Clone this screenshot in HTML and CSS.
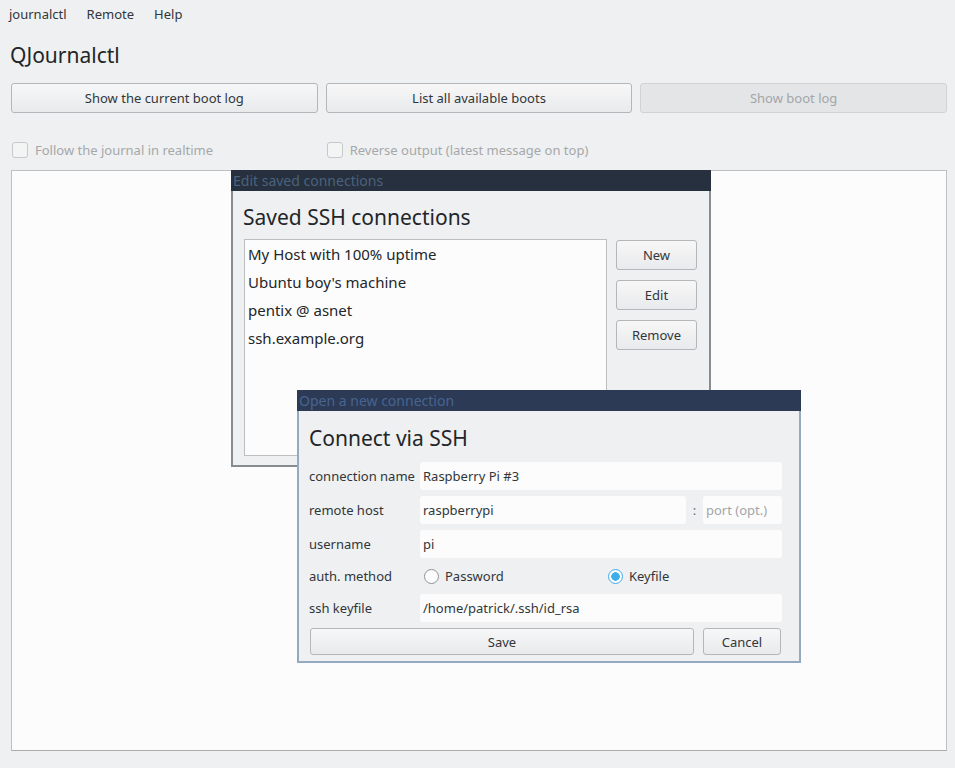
FILE: index.html
```html
<!DOCTYPE html>
<html lang="en">
<head>
    <meta charset="UTF-8">
    <title>QJournalctl</title>
    <link rel="stylesheet" href="styles.css">
</head>
<body>
    <div class="menubar">
        <span>journalctl</span>
        <span>Remote</span>
        <span>Help</span>
    </div>

    <div class="main">
        <h1 class="app-title">QJournalctl</h1>

        <div class="button-row">
            <button class="btn">Show the current boot log</button>
            <button class="btn">List all available boots</button>
            <button class="btn" disabled>Show boot log</button>
        </div>

        <div class="check-row">
            <label class="check"><span class="box"></span>Follow the journal in realtime</label>
            <label class="check"><span class="box"></span>Reverse output (latest message on top)</label>
        </div>

        <div class="log-area"></div>
    </div>

    <!-- Edit saved connections -->
    <div class="window saved-win">
        <div class="titlebar">Edit saved connections</div>
        <div class="win-body">
            <h2 class="win-heading">Saved SSH connections</h2>
            <div class="saved-row">
                <ul class="conn-list">
                    <li>My Host with 100% uptime</li>
                    <li>Ubuntu boy's machine</li>
                    <li>pentix @ asnet</li>
                    <li>ssh.example.org</li>
                </ul>
                <div class="side-buttons">
                    <button class="btn">New</button>
                    <button class="btn">Edit</button>
                    <button class="btn">Remove</button>
                </div>
            </div>
        </div>
    </div>

    <!-- Open a new connection -->
    <div class="window connect-win">
        <div class="titlebar">Open a new connection</div>
        <div class="win-body">
            <h2 class="win-heading">Connect via SSH</h2>
            <div class="form">
                <span class="lbl">connection name</span>
                <div class="field">Raspberry Pi #3</div>

                <span class="lbl">remote host</span>
                <div class="host-row">
                    <div class="field">raspberrypi</div>
                    <span class="colon">:</span>
                    <div class="field placeholder">port (opt.)</div>
                </div>

                <span class="lbl">username</span>
                <div class="field">pi</div>

                <span class="lbl">auth. method</span>
                <div class="radio-row">
                    <label class="radio"><span class="dot"></span>Password</label>
                    <label class="radio"><span class="dot on"></span>Keyfile</label>
                </div>

                <span class="lbl">ssh keyfile</span>
                <div class="field">/home/patrick/.ssh/id_rsa</div>
            </div>
            <div class="dialog-buttons">
                <button class="btn save">Save</button>
                <button class="btn cancel">Cancel</button>
            </div>
        </div>
    </div>
</body>
</html>
```

FILE: styles.css
```css
body {
    margin: 0;
    background: #eff0f1;
    color: #31363b;
    font-family: 'Noto Sans', 'Open Sans', sans-serif;
    font-size: 13px;
    height: 768px;
    overflow: hidden;
    position: relative;
}

.menubar {
    display: flex;
    gap: 20px;
    height: 28px;
    align-items: center;
    padding-left: 9px;
}

.main {
    padding: 0 8px 0 11px;
}

.app-title {
    margin: 12px 0 0 -1px;
    font-size: 21px;
    font-weight: normal;
    line-height: 30px;
    color: #232629;
}

.btn {
    font-family: inherit;
    font-size: 13px;
    color: #31363b;
    height: 30px;
    background: linear-gradient(#f7f7f8, #e9eaeb);
    border: 1px solid #b4b7ba;
    border-radius: 3px;
    padding: 0 8px;
}

.btn:disabled {
    background: #e4e5e7;
    border-color: #d0d2d4;
    color: #a3a6a9;
}

.button-row {
    display: grid;
    grid-template-columns: repeat(3, 1fr);
    gap: 8px;
    margin-top: 13px;
}

.check-row {
    display: grid;
    grid-template-columns: repeat(3, 1fr);
    gap: 8px;
    margin-top: 27px;
    height: 20px;
    align-items: center;
}

.check {
    display: flex;
    align-items: center;
    gap: 7px;
    color: #a5a8ab;
    white-space: nowrap;
    padding-left: 1px;
}

.check .box {
    width: 14px;
    height: 14px;
    border: 1px solid #c6c8ca;
    border-radius: 3px;
    background: #f3f4f4;
}

.log-area {
    margin-top: 10px;
    height: 579px;
    background: #fcfcfc;
    border: 1px solid #bdbfc1;
    border-bottom-color: #a9abad;
}

/* floating dialogs */
.window {
    position: absolute;
    display: flex;
    flex-direction: column;
}

.saved-win {
    left: 231px;
    top: 170px;
    width: 480px;
    height: 297px;
}

.connect-win {
    left: 297px;
    top: 390px;
    width: 504px;
    height: 273px;
}

.titlebar {
    height: 21px;
    line-height: 21px;
    font-size: 14px;
    padding-left: 2px;
    background: #27303e;
    color: #4a627d;
    white-space: nowrap;
}

.connect-win .titlebar {
    background: #2c3a56;
    color: #48648f;
}

.win-body {
    flex: 1;
    background: #eff0f1;
    border: 2px solid #878c90;
    border-top: none;
}

.connect-win .win-body {
    border-color: #95aac0;
}

.win-heading {
    margin: 0;
    font-size: 21px;
    font-weight: normal;
    line-height: 28px;
    color: #232629;
}

.saved-win .win-body {
    padding: 12px 12px 0 10px;
}

.saved-win .conn-list {
    margin-left: 1px;
}

.saved-row {
    display: flex;
    gap: 9px;
    margin-top: 8px;
}

.conn-list {
    list-style: none;
    margin: 0;
    padding: 0 0 0 3px;
    width: 359px;
    height: 215px;
    background: #fcfcfc;
    border: 1px solid #bcbec0;
    font-size: 15px;
    color: #232629;
}

.conn-list li {
    line-height: 28px;
}

.side-buttons {
    display: flex;
    flex-direction: column;
    gap: 10px;
    padding-top: 1px;
}

.side-buttons .btn {
    width: 81px;
}

.connect-win .win-body {
    padding: 13px 17px 0 10px;
}

.form {
    display: grid;
    grid-template-columns: 111px 1fr;
    grid-template-rows: 28px 28px 28px 24px 28px;
    row-gap: 6px;
    margin-top: 10px;
    align-items: center;
}

.lbl {
    white-space: nowrap;
}

.field {
    height: 28px;
    line-height: 28px;
    background: #fcfcfc;
    border-radius: 3px;
    padding-left: 3px;
    white-space: nowrap;
}

.field.placeholder {
    color: #a3a6a9;
}

.host-row {
    display: grid;
    grid-template-columns: 1fr 17px 79px;
    align-items: center;
}

.colon {
    text-align: center;
    color: #6b7074;
}

.radio-row {
    display: grid;
    grid-template-columns: 184px 1fr;
    align-items: center;
}

.radio {
    display: flex;
    align-items: center;
    gap: 6px;
    padding-left: 4px;
}

.dot {
    width: 13px;
    height: 13px;
    border: 1px solid #8f9396;
    border-radius: 50%;
    background: #fcfcfc;
}

.dot.on {
    border-color: #3daee9;
    background: radial-gradient(circle, #3daee9 0, #3daee9 4px, #fcfcfc 4.5px);
}

.dialog-buttons {
    display: flex;
    gap: 9px;
    margin-top: 6px;
    padding-left: 1px;
}

.dialog-buttons .btn {
    height: 27px;
}

.dialog-buttons .save {
    flex: 1;
}

.dialog-buttons .cancel {
    width: 78px;
    margin-right: 1px;
}
```
